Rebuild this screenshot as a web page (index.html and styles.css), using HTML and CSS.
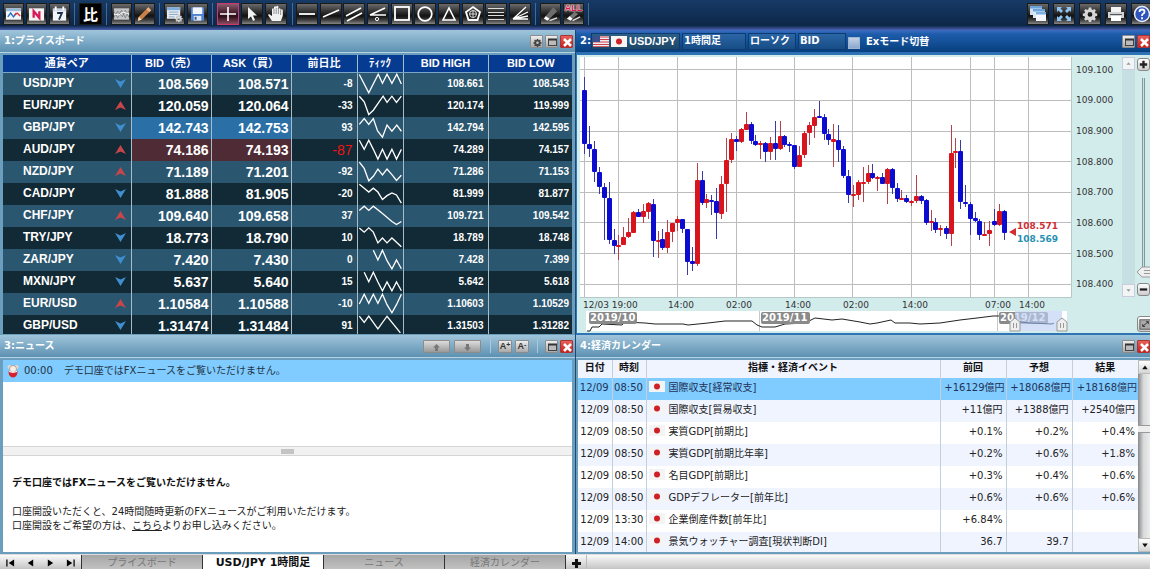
FILE: index.html
```html
<!DOCTYPE html>
<html lang="ja">
<head>
<meta charset="utf-8">
<title>FX トレードツール</title>
<link rel="stylesheet" href="styles.css">
</head>
<body>
<svg class="defs" width="0" height="0" aria-hidden="true">
  <symbol id="gear" viewBox="0 0 20 20"><path fill-rule="evenodd" d="M8.500 2h3l.4 2.200 1.600.7 1.900-1.300 2 2-1.300 1.900.7 1.600 2.200.4v3l-2.200.4-.7 1.600 1.300 1.900-2 2-1.900-1.300-1.600.7-.4 2.200h-3l-.4-2.200-1.600-.7-1.900 1.300-2-2 1.300-1.900-.7-1.600L1 12.500v-3l2.200-.4.7-1.600-1.300-1.900 2-2 1.900 1.300 1.600-.7zM10 7.500a3 3 0 1 0 0 6 3 3 0 0 0 0-6z" fill="currentColor"/></symbol>
  <symbol id="restore" viewBox="0 0 13 13"><rect x="2.500" y="3.500" width="8" height="6" fill="#bbb" stroke="#444"/><path d="M2 3.500h9" stroke="#333" stroke-width="2"/></symbol>
  <symbol id="close" viewBox="0 0 13 13"><path d="M3 3l7 7M10 3l-7 7" stroke="#fff" stroke-width="2.600"/></symbol>
  <symbol id="down" viewBox="0 0 11 9"><path d="M0 0l5.500 2.500L11 0 5.500 9z" fill="#3f8fd0"/></symbol>
  <symbol id="up" viewBox="0 0 11 9"><path d="M0 9l5.500-2.500L11 9 5.500 0z" fill="#c8464a"/></symbol>
  <symbol id="jp" viewBox="0 0 16 11"><rect width="16" height="11" fill="#f4f4f4"/><circle cx="8" cy="5.500" r="3" fill="#cf2027"/></symbol>
</svg>

<header class="toolbar">
  <div class="group">
    <button class="tool" aria-label="チャート"><svg viewBox="0 0 20 20"><rect x="2" y="4" width="16" height="12" fill="#f3f6fa"/><path d="M2 4h16v3H2z" fill="#9bb9d8"/><path d="M4 13l3-4 3 4 3-4" fill="none" stroke="#2a6fc0" stroke-width="1.500"/><path d="M11 11l3-2 3 3" fill="none" stroke="#d33" stroke-width="1.500"/></svg></button>
    <button class="tool" aria-label="ニュース"><svg viewBox="0 0 20 20"><rect x="2" y="4" width="16" height="13" fill="#f3f3f3"/><path d="M7 14V7l6 7V7" fill="none" stroke="#d8185a" stroke-width="2.400"/></svg></button>
    <button class="tool" aria-label="カレンダー"><svg viewBox="0 0 20 20"><path d="M3 5h14v12H3z" fill="#f1f4f8"/><path d="M3 4h14v3H3z" fill="#c9d4e2"/><path d="M6 2v4M14 2v4" stroke="#fff" stroke-width="2"/><path d="M7.500 9h5l-3 7" fill="none" stroke="#1c2f4a" stroke-width="2"/></svg></button>
  </div>
  <div class="group"><button class="tool compare">比</button></div>
  <div class="group">
    <button class="tool" aria-label="テクニカル"><svg viewBox="0 0 20 20"><path d="M2 4h16v12H2z" fill="#c2c6c9"/><path d="M2 7l4 7 4-8 4 8 4-8M2 14l4-7 5 6 3-7 4 8" fill="none" stroke="#777" stroke-width=".8"/><path d="M2 10l5 1 5-3 6 2" fill="none" stroke="#fff"/></svg></button>
    <button class="tool" aria-label="描画"><svg viewBox="0 0 20 20"><path d="M3 17l1-4L14 3l3 3L7 16z" fill="#c9814a"/><path d="M14 3l3 3-2 2-3-3z" fill="#e8b48a"/><path d="M3 17l1-4 3 3z" fill="#f1dcc0"/></svg></button>
  </div>
  <div class="group">
    <button class="tool" aria-label="画面設定"><svg viewBox="0 0 20 20"><path d="M2 3h14v12H2z" fill="#e6edf5"/><path d="M2 3h14v3H2z" fill="#7faedc"/><path d="M4 8h10M4 10.500h10M4 13h6" stroke="#8ba5bf"/><use href="#gear" x="10" y="10" width="9" height="9" color="#ccc"/></svg></button>
    <button class="tool" aria-label="保存"><svg viewBox="0 0 20 20"><path d="M3 3h14v14H3z" fill="#4f83d0"/><path d="M5 3h10v7H5z" fill="#f2f5fa"/><path d="M6 12h8v5H6z" fill="#dfe7f3"/><path d="M7 13h2v3H7z" fill="#31549a"/></svg></button>
  </div>
  <div class="group wide">
    <button class="tool selected" aria-label="十字"><svg viewBox="0 0 20 20"><path d="M10 3v14M2 10h16" stroke="#fff" stroke-width="1.600"/></svg></button>
    <button class="tool" aria-label="選択"><svg viewBox="0 0 20 20"><path d="M6 3v12l3-2.500 2 4.500 2-1-2-4.500h4z" fill="#f2f2f2"/></svg></button>
    <button class="tool" aria-label="移動"><svg viewBox="0 0 20 20"><path d="M6 17l-4-6 1-1 3 2V5q1-1.500 2 0V3q1-1.500 2.200 0v-.5q1-1.500 2.200 0V5q1.200-1.500 2.200 0V6q1.200-1.500 2.200 0v6l-2 5z" fill="#f2f2f2"/><path d="M8 5v5M10.200 4v6M12.400 4v6M14.600 6v5" stroke="#555" stroke-width=".6"/></svg></button>
  </div>
  <div class="group draw">
    <button class="tool" aria-label="水平線"><svg viewBox="0 0 20 20"><path d="M2 10h16" stroke="#fff" stroke-width="1.800"/></svg></button>
    <button class="tool" aria-label="トレンドライン"><svg viewBox="0 0 20 20"><path d="M2 13L18 6" stroke="#fff" stroke-width="1.500"/></svg></button>
    <button class="tool" aria-label="平行線"><svg viewBox="0 0 20 20"><path d="M2 12L17 4M3 17l15-8" stroke="#fff" stroke-width="1.600"/></svg></button>
    <button class="tool" aria-label="角度"><svg viewBox="0 0 20 20"><path d="M17 4L2 11h16" fill="none" stroke="#fff" stroke-width="1.600"/><circle cx="9" cy="15" r="1.600" fill="none" stroke="#fff"/></svg></button>
    <button class="tool" aria-label="四角形"><svg viewBox="0 0 20 20"><rect x="3" y="3" width="14" height="13" fill="none" stroke="#fff" stroke-width="1.800"/></svg></button>
    <button class="tool" aria-label="円"><svg viewBox="0 0 20 20"><circle cx="10" cy="10" r="6.800" fill="none" stroke="#fff" stroke-width="1.800"/></svg></button>
    <button class="tool" aria-label="三角形"><svg viewBox="0 0 20 20"><path d="M10 4l6 12H4z" fill="none" stroke="#fff" stroke-width="1.600"/></svg></button>
    <button class="tool" aria-label="五角形"><svg viewBox="0 0 20 20"><path d="M10 3l7 5-2.500 8h-9L3 8z" fill="none" stroke="#fff" stroke-width="1.800"/><circle cx="10" cy="10" r="3.500" fill="none" stroke="#ddd"/><path d="M10 7v6M7 10h6" stroke="#ddd"/></svg></button>
    <button class="tool" aria-label="リトレースメント"><svg viewBox="0 0 20 20"><path d="M2 4.500h16M2 8.500h16M2 11.500h16M2 15.500h16" stroke="#ddd" stroke-width="1.200"/></svg></button>
    <button class="tool" aria-label="ファン"><svg viewBox="0 0 20 20"><path d="M16 3L3 15l15-7M3 15l15-3M3 15h15" fill="none" stroke="#fff" stroke-width="1.300"/></svg></button>
  </div>
  <div class="group">
    <button class="tool" aria-label="消去"><svg viewBox="0 0 20 20"><path d="M5 12l8-9 4 4-8 8z" fill="#6d6d6d"/><path d="M5 12l4 3-2 2-4-2z" fill="#fff"/><path d="M9 17l8-3" stroke="#ddd" stroke-width="1.500"/></svg></button>
    <button class="tool all" aria-label="すべて消去"><span>ALL</span><svg viewBox="0 0 20 20"><path d="M6 12l5-4 4 2-6 5z" fill="#777"/><path d="M6 12l3 3-2 2-4-2z" fill="#fff"/><path d="M9 17l8-4" stroke="#ddd" stroke-width="1.500"/></svg></button>
  </div>
  <div class="group right">
    <button class="tool" aria-label="ウィンドウ"><svg viewBox="0 0 20 20"><path d="M2 2h12v9H2z" fill="#cfdff0"/><path d="M2 2h12v2.500H2z" fill="#6ba2d8"/><path d="M5 5h12v9H5z" fill="#dbe7f4"/><path d="M5 5h12v2.500H5z" fill="#6ba2d8"/><path d="M8 8h10v9H8z" fill="#f4f8fc"/><path d="M8 8h10v2.500H8z" fill="#79afe2"/></svg></button>
    <button class="tool" aria-label="全画面"><svg viewBox="0 0 20 20"><path d="M3 8V3h5L6.500 4.500 9 7 7 9 4.500 6.500zM17 8V3h-5l1.500 1.500L11 7l2 2 2.500-2.500zM3 12v5h5l-1.500-1.500L9 13l-2-2-2.500 2.500zM17 12v5h-5l1.500-1.500L11 13l2-2 2.500 2.500z" fill="#8cc4f5"/></svg></button>
    <button class="tool" aria-label="設定"><svg viewBox="0 0 20 20"><use href="#gear" x="2" y="2" width="16" height="16" color="#d6d6d6"/></svg></button>
    <button class="tool" aria-label="印刷"><svg viewBox="0 0 20 20"><path d="M5 3h10v5H5z" fill="#f4f4f4"/><path d="M2 8h16v6H2z" fill="#cfd3d6"/><path d="M5 12h10v5H5z" fill="#fff"/><path d="M4 10.500h12" stroke="#555"/></svg></button>
    <button class="tool" aria-label="ヘルプ"><svg viewBox="0 0 20 20"><circle cx="10" cy="10" r="7.500" fill="#2d55bb" stroke="#e8eefc" stroke-width="1.500"/><path d="M7.500 8q0-2.500 2.500-2.500t2.500 2.300q0 1.300-1.500 2-1 .6-1 2.200M10 13.300v2" fill="none" stroke="#fff" stroke-width="1.800"/></svg></button>
  </div>
</header>

<main class="workspace">
  <section class="panel">
    <div class="titlebar"><h2>1:プライスボード</h2>
      <div class="winbtns">
        <button class="win" aria-label="設定"><svg viewBox="0 0 13 13"><use href="#gear" x="2" y="2" width="9" height="9" color="#444"/></svg></button>
        <button class="win" aria-label="最大化"><svg><use href="#restore"/></svg></button>
        <button class="win close" aria-label="閉じる"><svg><use href="#close"/></svg></button>
      </div>
    </div>
    <div class="body board">
      <table class="prices">
        <colgroup><col class="c-pair"><col class="c-rate"><col class="c-rate"><col class="c-diff"><col class="c-tick"><col class="c-hl"><col class="c-hl"></colgroup>
        <thead><tr><th>通貨ペア</th><th>BID（売）</th><th>ASK（買）</th><th>前日比</th><th>ﾃｨｯｸ</th><th>BID HIGH</th><th>BID LOW</th></tr></thead>
        <tbody>
          <tr><td><div class="pair">USD/JPY<svg><use href="#down"/></svg></div></td><td>108.569</td><td>108.571</td><td>-8</td><td><svg viewBox="0 0 138 66"><polyline points="4,4 33,60 62,3 75,31 89,3 104,31 119,3 133,33"/></svg></td><td>108.661</td><td>108.543</td></tr>
          <tr><td><div class="pair">EUR/JPY<svg><use href="#up"/></svg></div></td><td>120.059</td><td>120.064</td><td>-33</td><td><svg viewBox="0 0 138 66"><polyline points="4,3 19,20 33,59 47,46 62,24 77,3 89,22 104,3 118,22 133,3"/></svg></td><td>120.174</td><td>119.999</td></tr>
          <tr class="fall"><td><div class="pair">GBP/JPY<svg><use href="#down"/></svg></div></td><td>142.743</td><td>142.753</td><td>93</td><td><svg viewBox="0 0 138 66"><polyline points="4,22 19,4 33,22 47,4 60,42 75,61 89,24 104,43 119,24 133,43"/></svg></td><td>142.794</td><td>142.595</td></tr>
          <tr class="rise"><td><div class="pair">AUD/JPY<svg><use href="#up"/></svg></div></td><td>74.186</td><td>74.193</td><td class="alert">-87</td><td><svg viewBox="0 0 138 66"><polyline points="4,3 19,31 33,3 47,31 61,61 75,31 89,61 104,31 118,61 133,31"/></svg></td><td>74.289</td><td>74.157</td></tr>
          <tr><td><div class="pair">NZD/JPY<svg><use href="#up"/></svg></div></td><td>71.189</td><td>71.201</td><td>-92</td><td><svg viewBox="0 0 138 66"><polyline points="4,3 19,22 33,60 47,46 61,24 75,42 89,24 104,41 118,59 133,43"/></svg></td><td>71.286</td><td>71.153</td></tr>
          <tr><td><div class="pair">CAD/JPY<svg><use href="#down"/></svg></div></td><td>81.888</td><td>81.905</td><td>-20</td><td><svg viewBox="0 0 138 66"><polyline points="4,3 19,15 33,27 47,15 61,27 75,50 89,38 104,30 118,36 133,61"/></svg></td><td>81.999</td><td>81.877</td></tr>
          <tr><td><div class="pair">CHF/JPY<svg><use href="#up"/></svg></div></td><td>109.640</td><td>109.658</td><td>37</td><td><svg viewBox="0 0 138 66"><polyline points="4,16 19,3 33,16 47,3 75,25 104,50 118,59 133,50"/></svg></td><td>109.721</td><td>109.542</td></tr>
          <tr><td><div class="pair">TRY/JPY<svg><use href="#down"/></svg></div></td><td>18.773</td><td>18.790</td><td>10</td><td><svg viewBox="0 0 138 66"><polyline points="4,2 19,15 33,2 47,15 61,48 75,33 89,48 104,33 133,60"/></svg></td><td>18.789</td><td>18.748</td></tr>
          <tr><td><div class="pair">ZAR/JPY<svg><use href="#down"/></svg></div></td><td>7.420</td><td>7.430</td><td>0</td><td><svg viewBox="0 0 138 66"><polyline points="47,3 61,33 75,3 89,35 104,60 118,33 133,60"/></svg></td><td>7.428</td><td>7.399</td></tr>
          <tr><td><div class="pair">MXN/JPY<svg><use href="#down"/></svg></div></td><td>5.637</td><td>5.640</td><td>15</td><td><svg viewBox="0 0 138 66"><polyline points="19,3 33,32 47,3 61,33 75,60 89,33 104,60 118,33 133,60"/></svg></td><td>5.642</td><td>5.618</td></tr>
          <tr><td><div class="pair">EUR/USD<svg><use href="#up"/></svg></div></td><td>1.10584</td><td>1.10588</td><td>-10</td><td><svg viewBox="0 0 138 66"><polyline points="4,33 19,3 33,31 47,3 61,31 75,3 89,35 104,60 118,35 133,3"/></svg></td><td>1.10603</td><td>1.10529</td></tr>
          <tr><td><div class="pair">GBP/USD<svg><use href="#down"/></svg></div></td><td>1.31474</td><td>1.31484</td><td>91</td><td><svg viewBox="0 0 138 66"><polyline points="4,3 19,22 33,3 61,42 89,3 130,54"/></svg></td><td>1.31503</td><td>1.31282</td></tr>
        </tbody>
      </table>
    </div>
  </section>

  <section class="panel active">
    <div class="titlebar"><h2>2:</h2>
      <button class="chip symbol">
        <svg class="flag" viewBox="0 0 16 11"><rect width="16" height="11" fill="#f4eded"/><path d="M0 1h16M0 3.500h16M0 6h16M0 8.500h16M0 10.700h16" stroke="#c8404a"/><rect width="7" height="6" fill="#3c4f8f"/></svg>
        <svg class="flag"><use href="#jp"/></svg>USD/JPY</button>
      <select class="chip period" aria-label="足種"><option>1時間足</option></select>
      <select class="chip" aria-label="チャート種別"><option>ローソク</option></select>
      <select class="chip" aria-label="価格"><option>BID</option></select>
      <label class="ex"><input type="checkbox">Exモード切替</label>
      <div class="winbtns">
        <button class="win" aria-label="最大化"><svg><use href="#restore"/></svg></button>
        <button class="win close" aria-label="閉じる"><svg><use href="#close"/></svg></button>
      </div>
    </div>
    <div class="body chart">
      <svg class="plot" viewBox="580 57 542 276" preserveAspectRatio="xMinYMin meet">
        <rect x="580" y="57" width="491" height="240" fill="#fff"/>
        <g id="grid" stroke="#bdbdbd"></g>
        <path d="M1071.500 57v240.500H580" fill="none" stroke="#b5c9c9"/>
        <g id="candles"></g>
        <g class="axis">
          <text x="1076" y="73">109.100</text><text x="1076" y="103">109.000</text><text x="1076" y="134">108.900</text><text x="1076" y="165">108.800</text><text x="1076" y="195">108.700</text><text x="1076" y="226">108.600</text><text x="1076" y="257">108.500</text><text x="1076" y="287">108.400</text>
          <text x="583" y="308">12/03 19:00</text><text x="668" y="308">14:00</text><text x="726" y="308">02:00</text><text x="785" y="308">14:00</text><text x="843" y="308">02:00</text><text x="902" y="308">14:00</text><text x="985" y="308">07:00</text><text x="1019" y="308">14:00</text>
        </g>
        <path d="M1009 232l7-4v8z" fill="#cf2f35"/>
        <text class="quote ask" x="1017" y="229">108.571</text>
        <text class="quote bid" x="1017" y="242">108.569</text>
        <rect x="586" y="311" width="481" height="20" fill="#fff"/>
        <path d="M759.500 311v20M997.500 311v20" stroke="#c8c8c8"/>
        <path fill="none" stroke="#222" d="M587 331h3l2-4h7l3-3 20 1 3-3 20 1 10 1h28l5 1 20-2 17-2h27l5 4 5 2 13 0 10-3 20-1 10-5 17 2 10-1 18 3 10 2 7-1 14-3 4 3 15 0 10 1 20-1 20-3 17-2 16-2h10"/>
        <g class="month"><rect x="589" y="312" width="48" height="12" rx="2"/><text x="590" y="321">2019/10</text><rect x="761" y="312" width="49" height="12" rx="2"/><text x="762" y="321">2019/11</text><rect x="999" y="312" width="49" height="12" rx="2"/><text x="1000" y="321">2019/12</text></g>
        <rect x="1015" y="311" width="47" height="20" fill="#bcd0f5" opacity=".65"/>
        <path fill="none" stroke="#6f82a6" d="M1020 322l10 1 22 1 2-1"/>
        <g fill="#eee" stroke="#999"><path d="M1015 318l5 4v9h-10v-9zM1062 318l5 4v9h-10v-9z"/><path d="M1013.500 323v5M1016.500 323v5M1060.500 323v5M1063.500 323v5"/></g>
      </svg>
      <div class="vscroll"><button aria-label="上へ"><svg viewBox="0 0 13 13"><path d="M4 8l2.500-3L9 8z" fill="#999"/></svg></button><button aria-label="下へ"><svg viewBox="0 0 13 13"><path d="M4 5l2.500 3L9 5z" fill="#999"/></svg></button></div>
      <div class="zoom">
        <button class="key" aria-label="拡大"><svg viewBox="0 0 12 12"><path d="M6 2v8M2 6h8" stroke="#222" stroke-width="2.500"/></svg></button>
        <svg class="rail" viewBox="0 0 15 206"><path d="M6.500 4v196" stroke="#7f9a9a" stroke-width="3"/><path d="M6.500 4v194" stroke="#cfe0e0"/><path d="M0 198l5-5h10v10H5z" fill="#eee" stroke="#999"/><path d="M7 196.500h8M7 199.500h8" stroke="#999"/></svg>
        <button class="key" aria-label="縮小"><svg viewBox="0 0 12 12"><path d="M2 6h8" stroke="#222" stroke-width="2.500"/></svg></button>
        <button class="key expand" aria-label="展開"><svg viewBox="0 0 16 16"><rect x="2" y="3" width="12" height="10" fill="#aaa" stroke="#555"/><path d="M5 10l6-5M8.500 5H11v2.500M5 7.500V10h2.500" fill="none" stroke="#333"/></svg></button>
      </div>
    </div>
  </section>

  <section class="panel">
    <div class="titlebar"><h2>3:ニュース</h2>
      <div class="winbtns news-tools">
        <button class="win long" aria-label="前へ"><svg viewBox="0 0 13 13"><path d="M6.500 3L10 6.500H8V10H5V6.500H3z" fill="#777"/></svg></button>
        <button class="win long" aria-label="次へ"><svg viewBox="0 0 13 13"><path d="M6.500 10L10 6.500H8V3H5v3.500H3z" fill="#777"/></svg></button>
        <i></i>
        <button class="win size">A<sup>+</sup></button>
        <button class="win size">A<sup>-</sup></button>
        <i></i>
        <button class="win" aria-label="最大化"><svg><use href="#restore"/></svg></button>
        <button class="win close" aria-label="閉じる"><svg><use href="#close"/></svg></button>
      </div>
    </div>
    <div class="body news">
      <div class="headlines">
        <div class="headline"><svg viewBox="0 0 12 14"><circle cx="2.500" cy="3" r="2" fill="#e8d7c8"/><circle cx="9.500" cy="3" r="2" fill="#e8d7c8"/><circle cx="6" cy="5" r="3.500" fill="#f6efe6" stroke="#9a7a6a" stroke-width=".6"/><path d="M1.500 7q4.500 2 9 0 0 6-4.500 6.500Q1.500 13 1.500 7z" fill="#d3202c"/><path d="M2 7.500q4 2 8 0" stroke="#fff" fill="none"/></svg><time>00:00</time><span>デモ口座ではFXニュースをご覧いただけません。</span></div>
      </div>
      <div class="splitter"><b></b></div>
      <article class="detail">
        <h3>デモ口座ではFXニュースをご覧いただけません。</h3>
        <p>口座開設いただくと、24時間随時更新のFXニュースがご利用いただけます。<br>口座開設をご希望の方は、<a href="#">こちら</a>よりお申し込みください。</p>
      </article>
    </div>
  </section>

  <section class="panel">
    <div class="titlebar"><h2>4:経済カレンダー</h2>
      <div class="winbtns">
        <button class="win" aria-label="最大化"><svg><use href="#restore"/></svg></button>
        <button class="win close" aria-label="閉じる"><svg><use href="#close"/></svg></button>
      </div>
    </div>
    <div class="body calendar">
      <table class="events">
        <colgroup><col class="c-date"><col class="c-date"><col><col class="c-val"><col class="c-val"><col class="c-val"></colgroup>
        <thead><tr><th>日付</th><th>時刻</th><th>指標・経済イベント</th><th>前回</th><th>予想</th><th>結果</th></tr></thead>
        <tbody>
          <tr class="current"><td>12/09</td><td>08:50</td><td><svg class="flag"><use href="#jp"/></svg>国際収支[経常収支]</td><td>+16129億円</td><td>+18068億円</td><td>+18168億円</td></tr>
          <tr><td>12/09</td><td>08:50</td><td><svg class="flag"><use href="#jp"/></svg>国際収支[貿易収支]</td><td>+11億円</td><td>+1388億円</td><td>+2540億円</td></tr>
          <tr><td>12/09</td><td>08:50</td><td><svg class="flag"><use href="#jp"/></svg>実質GDP[前期比]</td><td>+0.1%</td><td>+0.2%</td><td>+0.4%</td></tr>
          <tr><td>12/09</td><td>08:50</td><td><svg class="flag"><use href="#jp"/></svg>実質GDP[前期比年率]</td><td>+0.2%</td><td>+0.6%</td><td>+1.8%</td></tr>
          <tr><td>12/09</td><td>08:50</td><td><svg class="flag"><use href="#jp"/></svg>名目GDP[前期比]</td><td>+0.3%</td><td>+0.4%</td><td>+0.6%</td></tr>
          <tr><td>12/09</td><td>08:50</td><td><svg class="flag"><use href="#jp"/></svg>GDPデフレーター[前年比]</td><td>+0.6%</td><td>+0.6%</td><td>+0.6%</td></tr>
          <tr><td>12/09</td><td>13:30</td><td><svg class="flag"><use href="#jp"/></svg>企業倒産件数[前年比]</td><td>+6.84%</td><td></td><td></td></tr>
          <tr><td>12/09</td><td>14:00</td><td><svg class="flag"><use href="#jp"/></svg>景気ウォッチャー調査[現状判断DI]</td><td>36.7</td><td>39.7</td><td></td></tr>
        </tbody>
      </table>
      <div class="scroll"><button aria-label="上へ"><svg viewBox="0 0 13 13"><path d="M3.500 9l3-4 3 4z" fill="#111"/></svg></button><span class="thumb"></span><button aria-label="下へ"><svg viewBox="0 0 13 13"><path d="M3.500 5l3 4 3-4z" fill="#111"/></svg></button></div>
    </div>
  </section>
</main>

<nav class="tabs">
  <div class="pager">
    <button aria-label="最初"><svg viewBox="0 0 10 10"><path d="M1 1v8" stroke="#111" stroke-width="1.500"/><path d="M9 1v8L3 5z"/></svg></button>
    <button aria-label="前"><svg viewBox="0 0 10 10"><path d="M8 1v8L2 5z"/></svg></button>
    <button aria-label="次"><svg viewBox="0 0 10 10"><path d="M2 1v8l6-4z"/></svg></button>
    <button aria-label="最後"><svg viewBox="0 0 10 10"><path d="M9 1v8" stroke="#111" stroke-width="1.500"/><path d="M1 1v8l6-4z"/></svg></button>
  </div>
  <button class="tab">プライスボード</button>
  <button class="tab on">USD/JPY 1時間足</button>
  <button class="tab">ニュース</button>
  <button class="tab">経済カレンダー</button>
  <button class="add" aria-label="追加"><svg viewBox="0 0 10 10"><path d="M5 0v10M0 5h10" stroke="#111" stroke-width="3.400"/></svg></button>
</nav>
<script src="chart.js"></script>
</body>
</html>
```

FILE: styles.css
```css
* { box-sizing: border-box; }
body {
  margin: 0;
  height: 100vh;
  overflow: hidden;
  display: flex;
  flex-direction: column;
  background: #0f2c52;
  font: 10px/14px "DejaVu Sans", "Noto Sans CJK JP", sans-serif;
  color: #222;
}
button, select { font: inherit; margin: 0; padding: 0; border: 0; color: inherit; }
svg { display: block; }
.defs { position: absolute; }
h2, h3, p { margin: 0; font-size: inherit; }

.toolbar {
  flex: none;
  height: 30px;
  width: calc(100% + 3px);
  padding: 3px 0 0 3px;
  display: flex;
  align-items: flex-start;
  background: linear-gradient(#173a66, #0d2748 85%, #4a5fae);
}
.group { display: flex; gap: 2px; padding-right: 4px; margin-right: 4px; border-right: 1px solid #456a93; }
.group.wide { padding-right: 5px; margin-right: 3px; }
.group.draw { width: 240px; justify-content: space-between; gap: 0; }
.group.right { margin: 0 0 0 auto; padding: 0; border: 0; gap: 4px; }
.tool {
  width: 21px;
  height: 22px;
  border: 1px solid #1a1a1a;
  background: linear-gradient(#6a6a6a, #2e2e2e 40%, #111 60%, #3d3d3d 80%, #858585);
}
.tool svg { width: 100%; height: 100%; }
.wide .tool, .draw .tool, .right .tool { width: 22px; }
.compare {
  width: 23px;
  background: #000;
  color: #fff;
  font: 700 15px/20px "Noto Sans CJK JP", sans-serif;
}
.selected { border-color: #d0386a; background: linear-gradient(#8a5a6c, #4a2230 40%, #2c0b17 60%, #8a4a60); }
.all { position: relative; }
.all span {
  position: absolute;
  left: 0;
  right: 0;
  top: 0;
  text-align: center;
  font: 700 9px/9px "Liberation Sans", sans-serif;
  color: #d81848;
  text-shadow: 0 0 1px #fff, 0 0 1px #fff, 0 0 2px #fff;
}

.workspace {
  flex: 1;
  min-height: 0;
  width: calc(100% + 3px);
  display: grid;
  grid-template-columns: 576fr 577fr;
  grid-template-rows: 305fr 219fr;
}
.panel {
  min-width: 0;
  min-height: 0;
  display: flex;
  flex-direction: column;
  background: #6b9dbd;
  border-right: 1px solid #1b4a75;
}
.titlebar {
  flex: none;
  height: 23px;
  padding: 0 2px 0 4px;
  display: flex;
  align-items: center;
  background: linear-gradient(#a0c5db, #5d91b2);
  border-bottom: 1px solid #b5d3e4;
  color: #fff;
}
.panel h2 { font-weight: 700; }
.body { flex: 1; min-height: 0; margin: 2px 3px; overflow: hidden; }
.board { margin-bottom: 1px; }
.active { background: #2f74b5; }
.active .titlebar { background: linear-gradient(#3c6cc0, #1d5cab 20%, #07407f); border-bottom-color: #2c6db5; }
.winbtns { margin-left: auto; display: flex; gap: 2px; align-items: center; }
.win {
  width: 13px;
  height: 13px;
  border: 1px solid #8c8c8c;
  border-radius: 1px;
  background: linear-gradient(#eee, #a9a9a9);
  display: grid;
  place-items: center;
}
.win svg { width: 13px; height: 13px; }
.win.close { background: linear-gradient(#e8605a, #c8201c); border-color: #a33; }
.win.long { width: 27px; margin-right: 2px; background: linear-gradient(#ddd, #999); }
.win.size { width: 14px; margin-right: 1px; display: flex; align-items: center; justify-content: center; color: #333; font: 700 9px/11px "Liberation Sans", sans-serif; }
.news-tools i { width: 1px; height: 14px; margin: 0 5px; background: #a9c9dc; }
.news-tools sup { font-size: 7px; line-height: 7px; align-self: flex-start; }

table { border-collapse: collapse; table-layout: fixed; width: 100%; }
th, td { padding: 0; white-space: nowrap; }
.prices { color: #fff; font: 700 10px/20px "Liberation Sans", "Noto Sans CJK JP", sans-serif; }
.c-pair { width: 128px; }
.c-rate { width: 80px; }
.c-diff { width: 66px; }
.c-tick { width: 46px; }
.c-hl { width: 85px; }
.prices th { height: 17px; background: #063b92; font-size: 11px; line-height: 16px; border-bottom: 1px solid #7aa6c8; }
.prices td { height: 22px; padding: 1px 4px 0 0; text-align: right; vertical-align: top; }
.prices th + th, .prices td + td { border-left: 1px solid #a9bdc8; }
.prices tbody tr { background: #122a36; }
.prices tbody tr:nth-child(odd) { background: #2a566f; }
.prices td:nth-child(2), .prices td:nth-child(3) { font-size: 14px; padding-right: 2px; }
.prices td:first-child { padding: 0 5px 0 20px; }
.prices td:nth-child(5) { padding: 0; }
.prices td:nth-child(5) svg { width: 45px; height: 22px; }
.prices polyline { fill: none; stroke: #fff; stroke-width: 4; }
.pair { display: flex; align-items: center; justify-content: space-between; font-size: 12px; }
.pair svg { width: 11px; height: 9px; margin-top: 2px; }
.fall td:nth-child(2), .fall td:nth-child(3) { background: #2a70a6; }
.rise td:nth-child(2), .rise td:nth-child(3) { background: #4f2b35; }
.prices .alert { color: #f01414; font-weight: 400; font-size: 14px; }

.chip {
  width: 48px;
  height: 17px;
  margin-right: 2px;
  padding: 0 1px;
  border: 1px solid #0d3a70;
  background: linear-gradient(#2b66a6, #174d86);
  color: #fff;
  font-weight: 700;
  appearance: none;
}
.period { width: 64px; }
.symbol {
  width: 89px;
  display: flex;
  align-items: center;
  gap: 2px;
  background: linear-gradient(#2c5f86, #1d4666);
  font: 700 11px/15px "Liberation Sans", sans-serif;
}
.flag { flex: none; width: 16px; height: 11px; }
.ex { display: flex; align-items: center; gap: 6px; font-weight: 700; padding-top: 2px; }
.ex input { appearance: none; margin: 1px 0 0; width: 12px; height: 12px; background: linear-gradient(#c3d2e6, #8ba7cc); border: 1px solid #9db4d3; }
.chart { margin: 2px 0 2px 1px; padding: 2px 0 0 3px; display: flex; background: #d2ecec; }
.plot { flex: 1; min-width: 0; height: 276px; }
.axis text { font: 9px "DejaVu Sans", sans-serif; fill: #333; }
.quote { font: 700 9px "DejaVu Sans", sans-serif; }
.ask { fill: #cf2f35; }
.bid { fill: #2690b4; }
.month rect { fill: #8a8a8a; }
.month text { font: 700 10px "DejaVu Sans", sans-serif; fill: #fff; }
.vscroll { flex: none; width: 13px; height: 240px; display: flex; flex-direction: column; justify-content: space-between; background: #c6dfe2; }
.vscroll button { width: 13px; height: 13px; background: #f2f5f5; border: 1px solid #ccd; }
.vscroll svg { width: 11px; height: 11px; }
.zoom { flex: none; width: 17px; padding: 1px 0 0 2px; }
.key { display: grid; place-items: center; width: 13px; height: 13px; background: linear-gradient(#fff, #ccc); border: 1px solid #888; border-radius: 3px; }
.key svg { width: 11px; height: 11px; }
.rail { width: 15px; height: 212px; }
.expand { width: 16px; height: 16px; margin-top: 20px; }
.expand svg { width: 15px; height: 15px; }

.news { display: flex; flex-direction: column; background: #fff; }
.headlines { flex: 1; }
.headline { height: 22px; padding-left: 4px; display: flex; align-items: center; background: #80cbff; color: #234; }
.headline svg { width: 12px; height: 14px; margin-right: 5px; }
.headline time { margin-right: 11px; }
.splitter { flex: none; height: 10px; display: grid; place-items: center; background: #f1f1f1; border: solid #d5d5d5; border-width: 1px 0; }
.splitter b { width: 13px; height: 5px; background: #c4c4c4; }
.detail { flex: none; height: 96px; padding: 20px 9px 0; }
.detail h3 { margin-bottom: 15px; color: #111; }
.detail a { color: inherit; }

.calendar { margin-left: 2px; margin-right: 0; display: flex; background: #fff; }
.events { flex: 1; }
.c-date { width: 34px; }
.c-val { width: 66px; }
.events th { height: 18px; background: #eff4ff; color: #111; line-height: 16px; vertical-align: top; }
.events td { height: 22px; text-align: right; line-height: 20px; padding-right: 3px; vertical-align: top; }
.events td:nth-child(-n+2) { text-align: center; padding: 0; }
.events td:nth-child(3) { text-align: left; padding-left: 2px; }
.events th + th, .events td + td { border-left: 1px solid #c3cfdb; }
.events tbody tr:nth-child(even) { background: #eff4ff; }
.events tbody .current { background: #80cbff; color: #235; }
.events .current td { padding-right: 1px; }
.events .flag { display: inline-block; margin-right: 4px; vertical-align: -1px; }
.scroll { flex: none; width: 14px; display: flex; flex-direction: column; justify-content: space-between; background: linear-gradient(90deg, #888, #d8dadc 40%, #f2f2f2); }
.scroll button { width: 14px; height: 14px; background: linear-gradient(#fff, #d5d5d5); border: 1px solid #bbb; }
.scroll svg { width: 12px; height: 12px; }
.thumb { height: 8px; margin-bottom: 54px; border: solid #999; border-width: 1px 0; background: #eee; }

.tabs {
  flex: none;
  height: 15px;
  overflow: hidden;
  display: flex;
  background: linear-gradient(#fafafa, #c4c4c4);
  border-top: 1px solid #ddd;
}
.tabs > * { height: 16px; flex: none; border-right: 1px solid #333; }
.pager { width: 82px; padding: 0 3px; display: flex; justify-content: space-between; align-items: center; }
.pager button { background: none; width: 14px; }
.pager svg { width: 9px; height: 10px; margin: 0 auto; }
.tab { width: 121px; background: linear-gradient(#a5a5a5, #c6c6c6); color: #777; }
.tab.on { background: #fff; color: #111; font-weight: 700; font-size: 11px; }
.add { width: 21px; background: none; border-right-color: #bbb; }
.add svg { width: 9px; height: 9px; margin: 0 auto; }
```

FILE: chart.js
```js
// Candles: [x, high, low, body top, body bottom, rising]
const candles = [
  [584,77,154,90,144,0],[589,126,157,144,149,0],[594,141,182,149,172,0],[599,167,194,172,187,0],
  [604,183,240,187,198,0],[609,182,244,198,240,0],[614,229,254,240,246,0],[618,235,260,245,246,1],
  [623,227,245,237,245,1],[628,218,238,232,237,1],[633,211,233,212,233,1],[638,209,217,212,217,0],
  [643,204,223,211,217,1],[648,202,219,203,212,1],[653,199,257,204,241,0],[658,231,258,240,241,1],
  [662,229,250,239,248,0],[667,220,253,232,248,1],[672,223,242,223,232,1],[677,216,231,219,223,1],
  [682,219,233,219,229,0],[687,229,275,229,262,0],[692,247,271,261,264,0],[697,163,266,180,264,1],
  [702,171,205,180,203,0],[706,194,208,199,203,1],[711,195,215,200,201,0],[716,188,239,201,213,0],
  [721,176,219,184,214,1],[726,138,212,160,184,1],[731,133,163,139,160,1],[736,136,151,139,142,0],
  [741,128,143,129,142,1],[746,112,130,124,130,1],[751,122,144,124,141,0],[755,135,146,141,145,0],
  [760,141,159,143,145,1],[765,142,162,143,152,0],[770,137,160,143,152,1],[775,121,160,143,149,0],
  [780,121,150,136,149,1],[784,135,147,136,145,0],[789,142,152,144,146,0],[794,145,169,145,167,0],
  [799,146,167,155,167,1],[804,131,158,133,155,1],[809,122,145,125,133,1],[814,109,138,117,126,1],
  [819,101,118,116,118,0],[824,114,140,117,134,0],[828,129,145,134,140,0],[833,124,167,139,142,1],
  [838,125,162,140,150,0],[843,146,178,149,176,0],[848,170,203,176,195,0],[853,185,207,194,195,1],
  [858,180,200,182,195,1],[863,167,202,182,183,1],[868,165,184,173,182,1],[872,164,179,173,178,0],
  [877,176,191,177,178,1],[882,173,184,177,184,0],[887,168,204,169,184,1],[892,168,194,169,188,0],
  [897,183,202,188,199,0],[901,190,200,198,199,1],[906,195,203,198,202,0],[911,200,206,201,202,1],
  [916,175,203,196,201,1],[921,195,204,196,201,0],[926,199,225,200,223,0],[931,210,231,221,222,1],
  [935,218,233,222,230,0],[940,225,236,228,230,1],[946,226,239,228,234,0],[951,125,246,153,234,1],
  [955,138,168,151,153,1],[960,140,209,151,202,0],[965,185,207,202,204,0],[970,202,235,204,219,0],
  [975,212,222,218,221,0],[979,219,240,221,235,0],[984,222,236,234,235,1],[989,221,246,230,234,1],
  [994,209,226,221,225,0],[999,204,226,211,225,1],[1004,210,240,211,233,0]
];
const path = d => `<path d="${d}"/>`;
document.getElementById('grid').innerHTML =
  [584, 618, 677, 736, 794, 852, 911, 970, 994, 1028].map(x => path(`M${x + 0.5} 57v240`)).join('') +
  [69, 100, 131, 161, 192, 222, 253, 284].map(y => path(`M580 ${y + 0.5}h491`)).join('');
document.getElementById('candles').innerHTML = candles.map(([x, hi, lo, top, bottom, up]) => {
  const [body, wick] = up ? ['#d8141c', '#b4424a'] : ['#0c0cd0', '#3a3aa8'];
  return `<rect x="${x}" y="${hi}" width="1" height="${lo - hi}" fill="${wick}"/>` +
    `<rect x="${x - 2}" y="${top}" width="5" height="${Math.max(bottom - top, 2)}" rx="1" fill="${body}"/>`;
}).join('');
```
